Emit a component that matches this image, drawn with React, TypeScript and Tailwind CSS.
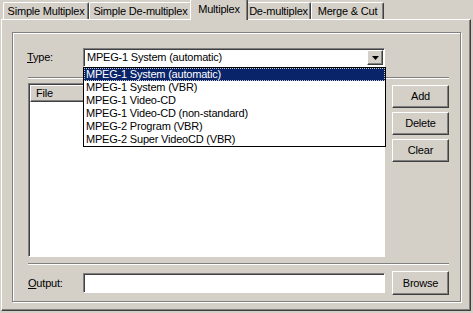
import React from "react";

const raised =
  "border border-t-white border-l-white border-r-[#404040] border-b-[#404040] shadow-[inset_-1px_-1px_0_#808080]";
const sunken =
  "border border-t-[#808080] border-l-[#808080] border-r-white border-b-white shadow-[inset_1px_1px_0_#404040]";

type TabProps = { label: string; width: string; active?: boolean };

function Tab({ label, width, active }: TabProps) {
  if (active) {
    return (
      <div
        className={`relative z-10 -mx-[2px] -mb-[1px] flex h-[21px] items-center justify-center rounded-t-[2px] border-l border-t border-r border-t-white border-l-white border-r-[#404040] bg-[#d4d0c8] pb-[2px] shadow-[inset_-1px_0_0_#808080] ${width}`}
      >
        {label}
      </div>
    );
  }
  return (
    <div
      className={`flex h-[17px] items-center justify-center rounded-t-[2px] border-l border-t border-r border-t-white border-l-white border-r-[#404040] pt-[1px] shadow-[inset_-1px_0_0_#808080] ${width}`}
    >
      {label}
    </div>
  );
}

function Button({ children, className = "" }: { children: React.ReactNode; className?: string }) {
  return (
    <div className={`flex w-[57px] items-center justify-center bg-[#d4d0c8] ${raised} ${className}`}>
      {children}
    </div>
  );
}

const OPTIONS = [
  "MPEG-1 System (automatic)",
  "MPEG-1 System (VBR)",
  "MPEG-1 Video-CD",
  "MPEG-1 Video-CD (non-standard)",
  "MPEG-2 Program (VBR)",
  "MPEG-2 Super VideoCD (VBR)",
];

export default function App() {
  return (
    <div className="flex h-[313px] w-[473px] flex-col overflow-hidden bg-[#d4d0c8] font-['Liberation_Sans',Arial,sans-serif] text-[11px] leading-none tracking-[-0.2px] text-black">
      {/* tab strip */}
      <div className="flex h-[19px] items-end pl-[3px]">
        <Tab label="Simple Multiplex" width="w-[86px]" />
        <Tab label="Simple De-multiplex" width="w-[103px]" />
        <Tab label="Multiplex" width="w-[58px]" active />
        <Tab label="De-multiplex" width="w-[65px]" />
        <Tab label="Merge & Cut" width="w-[73px]" />
      </div>

      {/* tab panel */}
      <div className="ml-[1px] h-[292px] w-[470px] border border-t-white border-l-white border-r-[#404040] border-b-[#404040] pl-[10px] pt-[12px] shadow-[inset_-1px_-1px_0_#808080]">
        {/* group box */}
        <div className="flex h-[270px] w-[449px] flex-col border border-[#808080] shadow-[inset_1px_1px_0_#fff,1px_1px_0_#fff]">
          {/* Type row */}
          <div className="mt-[15px] flex items-center pl-[14px]">
            <div className="w-[56px]">
              <span className="underline underline-offset-1">T</span>ype:
            </div>
            <div className="relative">
              <div className={`flex h-[19px] w-[302px] items-center bg-white pl-[3px] ${sunken}`}>
                <span className="flex-1">MPEG-1 System (automatic)</span>
                <div className={`mr-[1px] flex h-[15px] w-[16px] items-center justify-center bg-[#d4d0c8] ${raised}`}>
                  <svg width="7" height="4" viewBox="0 0 7 4">
                    <path d="M0 0h7L3.5 4z" fill="#000" />
                  </svg>
                </div>
              </div>
              {/* open dropdown list */}
              <div className="absolute left-0 top-full z-20 w-[303px] border border-black bg-white">
                {OPTIONS.map((o, i) => (
                  <div
                    key={o}
                    className={`flex h-[13px] items-center pl-[2px] ${
                      i === 0
                        ? "bg-[#0a246a] text-white outline outline-1 -outline-offset-1 outline-dotted outline-[#c8c8c8]"
                        : ""
                    }`}
                  >
                    {o}
                  </div>
                ))}
              </div>
            </div>
          </div>

          {/* list + buttons frame */}
          <div className="ml-[15px] mt-[10px] flex h-[187px] w-[421px] gap-[7px] border-y border-[#808080] shadow-[inset_0_1px_0_#fff,0_1px_0_#fff]">
            <div className={`mt-[5px] flex h-[174px] w-[357px] flex-col bg-white ${sunken}`}>
              <div className={`ml-[1px] mt-[1px] flex h-[17px] items-center bg-[#d4d0c8] pl-[5px] ${raised}`}>
                File
              </div>
            </div>
            <div className="mt-[7px] flex flex-col gap-[4px]">
              <Button className="h-[23px]">Add</Button>
              <Button className="h-[23px]">Delete</Button>
              <Button className="h-[23px]">Clear</Button>
            </div>
          </div>

          {/* Output row */}
          <div className="ml-[15px] mt-[7px] flex h-[24px] items-center">
            <div className="w-[55px]">
              <span className="underline underline-offset-1">O</span>utput:
            </div>
            <div className={`h-[20px] w-[302px] bg-white ${sunken}`} />
            <Button className="ml-[7px] h-[24px]">Browse</Button>
          </div>
        </div>
      </div>
    </div>
  );
}
